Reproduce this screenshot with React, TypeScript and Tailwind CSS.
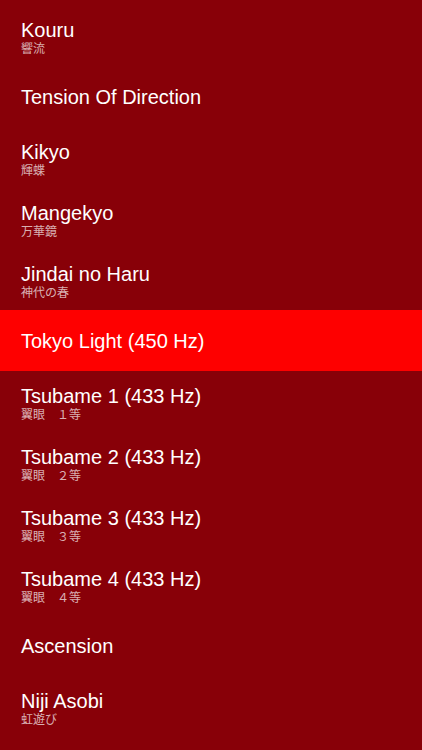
const items: { title: string; sub?: string }[] = [
  { title: 'Kouru', sub: '響流' },
  { title: 'Tension Of Direction' },
  { title: 'Kikyo', sub: '輝蝶' },
  { title: 'Mangekyo', sub: '万華鏡' },
  { title: 'Jindai no Haru', sub: '神代の春' },
  { title: 'Tokyo Light (450 Hz)' },
  { title: 'Tsubame 1 (433 Hz)', sub: '翼眼　１等' },
  { title: 'Tsubame 2 (433 Hz)', sub: '翼眼　２等' },
  { title: 'Tsubame 3 (433 Hz)', sub: '翼眼　３等' },
  { title: 'Tsubame 4 (433 Hz)', sub: '翼眼　４等' },
  { title: 'Ascension' },
  { title: 'Niji Asobi', sub: '虹遊び' },
];

const App = () => {
  return (
    <div
      className="w-[422px] h-[750px] overflow-hidden bg-[#880008] pt-[5px]"
      style={{ fontFamily: '"Liberation Sans", "Noto Sans CJK JP", sans-serif' }}
    >
      {items.map((item, i) => (
        <div
          key={item.title}
          className={`h-[61px] flex flex-col justify-center px-[21px] ${
            item.sub ? 'pt-[3px]' : ''
          } ${i === 5 ? 'bg-[#fe0000]' : ''}`}
        >
          <div className="text-white text-[20px] leading-[24px]">{item.title}</div>
          {item.sub && (
            <div className="text-white/70 text-[12px] leading-[14px]">{item.sub}</div>
          )}
        </div>
      ))}
    </div>
  );
};

export default App;
